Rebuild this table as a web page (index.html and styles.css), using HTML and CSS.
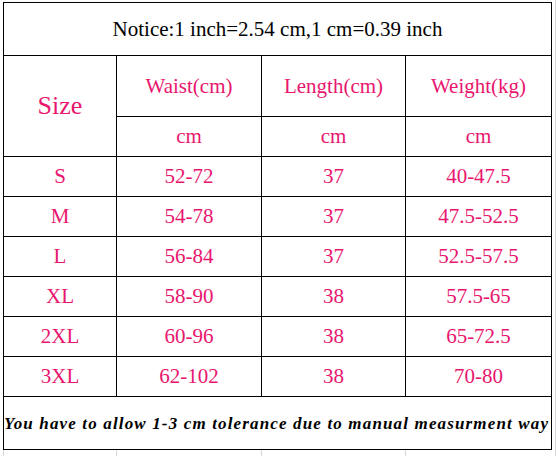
FILE: index.html
```html
<!DOCTYPE html>
<html lang="en">
<head>
    <meta charset="UTF-8">
    <meta name="viewport" content="width=device-width, initial-scale=1.0">
    <title>Size Chart</title>
    <link rel="stylesheet" href="styles.css">
</head>
<body>

<div class="sheet">
    <table class="size-chart">
        <colgroup>
            <col class="col-size">
            <col class="col-waist">
            <col class="col-length">
            <col class="col-weight">
        </colgroup>
        <tr class="row-notice">
            <td colspan="4" class="notice">Notice:1 inch=2.54 cm,1 cm=0.39 inch</td>
        </tr>
        <tr class="row-head">
            <td rowspan="2" class="size-head">Size</td>
            <td>Waist(cm)</td>
            <td>Length(cm)</td>
            <td>Weight(kg)</td>
        </tr>
        <tr class="row-unit">
            <td>cm</td>
            <td>cm</td>
            <td>cm</td>
        </tr>
        <tr class="row-data"><td>S</td><td>52-72</td><td>37</td><td>40-47.5</td></tr>
        <tr class="row-data"><td>M</td><td>54-78</td><td>37</td><td>47.5-52.5</td></tr>
        <tr class="row-data"><td>L</td><td>56-84</td><td>37</td><td>52.5-57.5</td></tr>
        <tr class="row-data"><td>XL</td><td>58-90</td><td>38</td><td>57.5-65</td></tr>
        <tr class="row-data"><td>2XL</td><td>60-96</td><td>38</td><td>65-72.5</td></tr>
        <tr class="row-data"><td>3XL</td><td>62-102</td><td>38</td><td>70-80</td></tr>
        <tr class="row-footer">
            <td colspan="4" class="footer">You have to allow 1-3 cm tolerance due to manual measurment way</td>
        </tr>
        <tr class="row-tail">
            <td></td><td></td><td></td><td></td>
        </tr>
    </table>
</div>

</body>
</html>
```

FILE: styles.css
```css
body {
    margin: 0;
    background: #ffffff;
    font-family: 'Liberation Serif', 'Times New Roman', serif;
}

.sheet {
    width: 552px;
    padding: 2px 0 0 3px;
    border-right: 1px solid #d8d8d8;
}

.size-chart {
    width: 548px;
    table-layout: fixed;
    border-collapse: collapse;
}

.col-size { width: 113px; }
.col-waist { width: 145px; }
.col-length { width: 144px; }
.col-weight { width: 146px; }

.size-chart td {
    border: 1px solid #000000;
    padding: 0;
    text-align: center;
    vertical-align: middle;
    color: #e8166e;
    font-size: 21px;
    line-height: 1;
}

.row-notice { height: 53px; }
.row-head { height: 61px; }
.row-unit { height: 40px; }
.row-data { height: 40px; }
.row-footer { height: 53px; }

.notice {
    color: #000000 !important;
}

.size-head {
    font-size: 26px !important;
}

.footer {
    color: #000000 !important;
    font-size: 17px !important;
    font-weight: bold;
    font-style: italic;
    letter-spacing: 1.15px;
    text-align: left !important;
    white-space: nowrap;
    overflow: hidden;
}

.row-tail { height: 6px; }

.size-chart .row-tail td {
    border-top: none;
    border-bottom: none;
    border-right: none;
    border-left: 1px solid #d8d8d8;
}
```
